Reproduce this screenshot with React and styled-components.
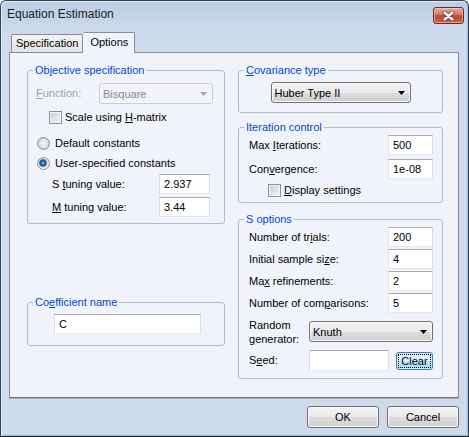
import React from 'react'
import styled, { createGlobalStyle } from 'styled-components'

const GlobalStyle = createGlobalStyle`
  html, body {
    margin: 0;
    padding: 0;
    background: #ffffff;
  }
  body {
    font-family: "Liberation Sans", Arial, sans-serif;
    font-size: 11px;
    color: #000;
  }
  * {
    box-sizing: border-box;
  }
`

//-------------------------Window chrome-----------------------
const Window = styled.div`
  width: 469px;
  height: 437px;
  display: flex;
  flex-direction: column;
  background: linear-gradient(#b8cde6 0px, #cbd9eb 26px, #cfdbec 40px);
  border: 1px solid #37414e;
  border-bottom-color: #1b2530;
  border-radius: 6px 6px 0 0;
  box-shadow: inset 1px 1px 0 #e4edf8, inset -1px -1px 0 #7fc6e8;
`

const TitleBar = styled.div`
  height: 31px;
  display: flex;
  justify-content: space-between;
  align-items: flex-start;
  padding: 6px 4px 0 6px;
`

const Title = styled.div`
  font-size: 12px;
  line-height: 15px;
  color: #1a1a1a;
`

const CloseButton = styled.div`
  width: 31px;
  height: 17px;
  display: flex;
  align-items: center;
  justify-content: center;
  border: 1px solid #6b2a22;
  border-radius: 3px;
  background: linear-gradient(#e9a898 0%, #d88373 40%, #c24a34 52%, #cc5e44 100%);
  box-shadow: inset 0 0 0 1px rgba(255, 220, 210, 0.55);
`

const Client = styled.div`
  flex: 1;
  display: flex;
  flex-direction: column;
  padding: 0 9px 0 8px;
`

//-------------------------Tabs-----------------------
const TabStrip = styled.div`
  height: 20px;
  display: flex;
  align-items: flex-end;
  padding-left: 2px;
`

const Tab = styled.div`
  position: relative;
  z-index: ${p => (p.$active ? 2 : 1)};
  height: ${p => (p.$active ? '21px' : '18px')};
  margin-bottom: ${p => (p.$active ? '-1px' : '0')};
  padding: ${p => (p.$active ? '3px 6px 0 7px' : '2px 4px 0 4px')};
  border: 1px solid #898c95;
  border-bottom: none;
  border-left-width: ${p => (p.$active ? '0' : '1px')};
  background: ${p => (p.$active ? '#f0f4fa' : 'linear-gradient(#f4f4f4, #e3e3e3)')};
  border-radius: 2px 2px 0 0;
  line-height: 13px;
`

const Panel = styled.div`
  height: 346px;
  display: grid;
  grid-template-columns: 198px 205px;
  column-gap: 13px;
  align-items: start;
  padding: 11px 15px 0 17px;
  border: 1px solid #898c95;
  border-bottom-color: #6e7177;
  background: #f0f4fa;
  box-shadow: 0 1px 0 #a9adb3;
`

const Column = styled.div`
  display: flex;
  flex-direction: column;
`

//-------------------------Group boxes-----------------------
const Fieldset = styled.fieldset`
  margin: ${p => p.$mt || 0}px 0 0 0;
  padding: 0;
  min-width: 0;
  border: 1px solid #b2bccb;
  border-radius: 3px;
`

const Legend = styled.legend`
  margin-left: 5px;
  padding: 0 2px;
  line-height: 13px;
  color: #0046d5;
`

const GroupBody = styled.div`
  display: flex;
  flex-direction: column;
  padding: ${p => p.$pad};
`

const Group = ({ title, mt, pad, children }) => (
  <Fieldset $mt={mt}>
    <Legend>{title}</Legend>
    <GroupBody $pad={pad}>{children}</GroupBody>
  </Fieldset>
)

//-------------------------Rows and controls-----------------------
const U = styled.span`
  text-decoration: underline;
  text-underline-offset: 1px;
`

const FieldRow = styled.div`
  display: flex;
  align-items: center;
  height: ${p => p.$h || 20}px;
  margin-top: ${p => p.$mt || 0}px;
  padding: 0 ${p => p.$right || 0}px 0 ${p => p.$left || 0}px;
`

const Label = styled.div`
  flex: ${p => (p.$w ? `0 0 ${p.$w}px` : '1')};
  line-height: ${p => p.$lh || 13}px;
  color: ${p => (p.$disabled ? '#a3a3a3' : '#000')};
  white-space: nowrap;
`

const TextBox = styled.input`
  width: ${p => (p.$w ? `${p.$w}px` : '100%')};
  height: ${p => p.$h || 20}px;
  margin: 0;
  padding: 0 4px;
  border: 1px solid #dbdfe6;
  border-top-color: #abadb3;
  border-bottom-color: #e3e9ef;
  background: #fff;
  font-family: inherit;
  font-size: 11px;
  color: #000;
  outline: none;
`

const Select = styled.div`
  width: ${p => p.$w}px;
  height: 21px;
  margin: ${p => (p.$center ? '0 auto' : '0')};
  display: flex;
  align-items: center;
  justify-content: space-between;
  padding: 0 5px 0 3px;
  border: 1px solid ${p => (p.$disabled ? '#c9ccd1' : '#707070')};
  border-radius: 3px;
  background: ${p =>
    p.$disabled
      ? '#f2f3f4'
      : 'linear-gradient(#f2f2f2 0%, #ebebeb 50%, #dddddd 51%, #cfcfcf 100%)'};
  box-shadow: inset 0 0 0 1px ${p => (p.$disabled ? '#f7f7f7' : '#fbfbfb')};
  color: ${p => (p.$disabled ? '#8a8a8a' : '#000')};
`

const Arrow = ({ color }) => (
  <svg width="7" height="4" viewBox="0 0 7 4">
    <path d="M0 0h7L3.5 4z" fill={color} />
  </svg>
)

const CheckRow = styled.label`
  display: flex;
  align-items: center;
  gap: ${p => p.$gap || 4}px;
  height: 13px;
  margin-top: ${p => p.$mt || 0}px;
  padding-left: ${p => p.$left || 0}px;
  line-height: 13px;
`

const CheckBox = styled.span`
  flex: 0 0 13px;
  height: 13px;
  border: 1px solid #8e8f8f;
  background: linear-gradient(135deg, #c6c9ce 0%, #e4e6e8 60%, #f5f5f5 100%);
  box-shadow: inset 0 0 0 1px #f4f4f4;
`

const Radio = styled.span`
  flex: 0 0 13px;
  height: 13px;
  border-radius: 50%;
  border: 1px solid #8e8f8f;
  background: ${p =>
    p.$checked
      ? 'radial-gradient(circle at 45% 45%, #9fd0f5 0, #2c7bc4 1.5px, #174f8a 3px, #8a9bb0 3.8px, #dfe2e6 4.5px, #f3f3f3 6px)'
      : 'radial-gradient(circle at 50% 50%, #f7f7f7 0, #e8e8e8 3px, #cfd1d4 5.5px, #eeeeee 6px)'};
`

const ButtonBar = styled.div`
  display: flex;
  justify-content: flex-end;
  gap: 8px;
  margin-top: 8px;
`

const Button = styled.button`
  width: ${p => p.$w || 72}px;
  height: ${p => p.$h || 22}px;
  margin: 0;
  padding: 0;
  border: 1px solid ${p => (p.$focused ? '#3c7fb1' : '#707070')};
  border-radius: 3px;
  background: ${p =>
    p.$focused
      ? 'linear-gradient(#eaf6fd 0%, #d9f0fc 50%, #bee6fd 51%, #a7d9f5 100%)'
      : 'linear-gradient(#f2f2f2 0%, #ebebeb 50%, #dddddd 51%, #cfcfcf 100%)'};
  box-shadow: inset 0 0 0 1px ${p => (p.$focused ? '#c8e8fa' : '#fbfbfb')};
  font-family: inherit;
  font-size: 11px;
  color: #000;
  outline: ${p => (p.$focused ? '1px dotted #000' : 'none')};
  outline-offset: -3px;
`

//-------------------------Page-----------------------
const App = () => {
  return (
    <>
      <GlobalStyle />
      <Window>
        <TitleBar>
          <Title>Equation Estimation</Title>
          <CloseButton>
            <svg width="13" height="10" viewBox="0 0 13 10">
              <path d="M2.5 1.5l8 7M10.5 1.5l-8 7" stroke="#6a3b35" strokeWidth="4.2" strokeLinecap="round" />
              <path d="M2.5 1.5l8 7M10.5 1.5l-8 7" stroke="#ffffff" strokeWidth="2.4" strokeLinecap="round" />
            </svg>
          </CloseButton>
        </TitleBar>

        <Client>
          <TabStrip>
            <Tab>Specification</Tab>
            <Tab $active>Options</Tab>
          </TabStrip>

          <Panel>
            <Column>
              <Group title="Objective specification" pad="6px 11px 6px 8px">
                <FieldRow $h={21}>
                  <Label $w={63} $disabled><U>F</U>unction:</Label>
                  <Select $w={114} $disabled>
                    <span>Bisquare</span>
                    <Arrow color="#a6a6a6" />
                  </Select>
                </FieldRow>
                <CheckRow $mt={7} $left={13} $gap={3}>
                  <CheckBox />
                  <span>Scale using <U>H</U>-matrix</span>
                </CheckRow>
                <CheckRow $mt={13} $left={1} $gap={5}>
                  <Radio />
                  <span>Default constants</span>
                </CheckRow>
                <CheckRow $mt={7} $left={1} $gap={5}>
                  <Radio $checked />
                  <span>User-specified constants</span>
                </CheckRow>
                <FieldRow $mt={4} $left={16} $right={3}>
                  <Label>S <U>t</U>uning value:</Label>
                  <TextBox $w={51} value="2.937" readOnly />
                </FieldRow>
                <FieldRow $mt={3} $left={16} $right={3}>
                  <Label><U>M</U> tuning value:</Label>
                  <TextBox $w={51} value="3.44" readOnly />
                </FieldRow>
              </Group>

              <Group title={<>Co<U>e</U>fficient name</>} mt={72} pad="5px 23px 11px 26px">
                <TextBox value="C" readOnly />
              </Group>
            </Column>

            <Column>
              <Group title={<><U>C</U>ovariance type</>} pad="5px 0 9px 0">
                <Select $w={140} $center>
                  <span>Huber Type II</span>
                  <Arrow color="#000" />
                </Select>
              </Group>

              <Group title="Iteration control" mt={8} pad="1px 9px 5px 10px">
                <FieldRow>
                  <Label>Max <U>I</U>terations:</Label>
                  <TextBox $w={45} value="500" readOnly />
                </FieldRow>
                <FieldRow $mt={4}>
                  <Label>Con<U>v</U>ergence:</Label>
                  <TextBox $w={45} value="1e-08" readOnly />
                </FieldRow>
                <CheckRow $mt={5} $left={19} $gap={3}>
                  <CheckBox />
                  <span><U>D</U>isplay settings</span>
                </CheckRow>
              </Group>

              <Group title="S options" mt={10} pad="1px 9px 7px 10px">
                <FieldRow>
                  <Label>Number of tr<U>i</U>als:</Label>
                  <TextBox $w={45} value="200" readOnly />
                </FieldRow>
                <FieldRow $mt={2}>
                  <Label>Initial sample si<U>z</U>e:</Label>
                  <TextBox $w={45} value="4" readOnly />
                </FieldRow>
                <FieldRow $mt={2}>
                  <Label>Ma<U>x</U> refinements:</Label>
                  <TextBox $w={45} value="2" readOnly />
                </FieldRow>
                <FieldRow $mt={2}>
                  <Label>Number of com<U>p</U>arisons:</Label>
                  <TextBox $w={45} value="5" readOnly />
                </FieldRow>
                <FieldRow $mt={8} $h={21}>
                  <Label $w={60} $lh={14}>Random<br /><U>g</U>enerator:</Label>
                  <Select $w={124}>
                    <span>Knuth</span>
                    <Arrow color="#000" />
                  </Select>
                </FieldRow>
                <FieldRow $mt={8} $h={21}>
                  <Label $w={60}>S<U>e</U>ed:</Label>
                  <TextBox $w={80} $h={21} value="" readOnly />
                  <Label />
                  <Button $w={37} $h={18} $focused>Clear</Button>
                </FieldRow>
              </Group>
            </Column>
          </Panel>

          <ButtonBar>
            <Button>OK</Button>
            <Button>Cancel</Button>
          </ButtonBar>
        </Client>
      </Window>
    </>
  )
}

export default App
